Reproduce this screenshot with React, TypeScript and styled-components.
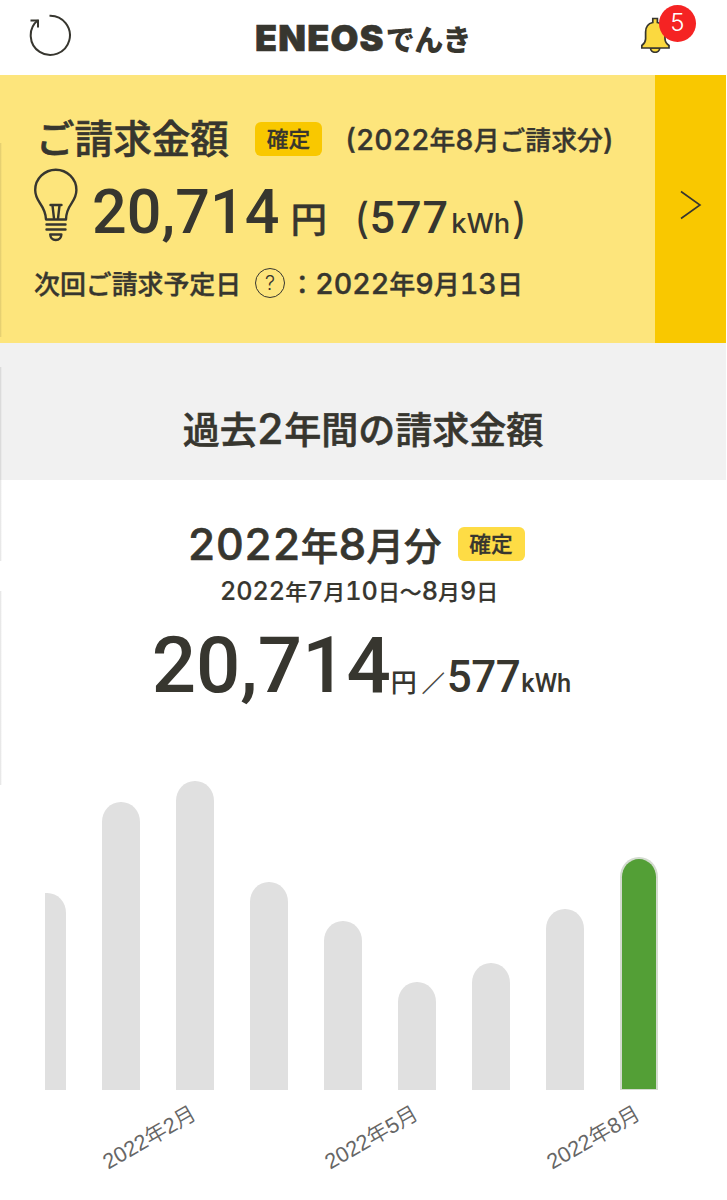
import React from 'react';
import styled, { createGlobalStyle } from 'styled-components';

const INK = '#37362f';
const JP = '"Noto Sans CJK JP", sans-serif';

const GlobalStyle = createGlobalStyle`
  * { box-sizing: border-box; }
  body { margin: 0; background: #fff; color: ${INK}; font-family: ${JP}; }
`;

const Page = styled.div`
  position: relative;
  width: 726px;
  height: 1200px;
  overflow: hidden;
  background: #fff;
`;

const Header = styled.header`
  display: flex;
  align-items: flex-start;
  justify-content: space-between;
  height: 75px;
  padding: 14px 29px 0 27px;
`;

const Logo = styled.h1`
  display: flex;
  align-items: baseline;
  margin: 6px 0 0 14px;
  line-height: 1;
  white-space: nowrap;
`;

const LogoLatin = styled.span`
  font: 900 36px/1 Inter, sans-serif;
  letter-spacing: 1.2px;
  margin-right: 1px;
  -webkit-text-stroke: 0.6px ${INK};
`;

const LogoKana = styled.span`
  font: 900 29px/1 ${JP};
  letter-spacing: -0.6px;
`;

const BellButton = styled.div`
  position: relative;
  width: 56px;
  height: 40px;
  padding-top: 3px;
`;

const Count = styled.span`
  position: absolute;
  left: 18px;
  top: -9px;
  width: 37px;
  height: 37px;
  border-radius: 50%;
  background: #f52323;
  color: #fff;
  font: 300 24px/36px Inter, sans-serif;
  text-align: center;
`;

const Banner = styled.section`
  display: flex;
  height: 268px;
  background: #fde57c;
`;

const BannerBody = styled.div`
  flex: 1;
  padding: 44px 0 0 34px;
`;

const BannerNext = styled.div`
  display: flex;
  align-items: center;
  justify-content: center;
  width: 71px;
  padding-bottom: 9px;
  background: #f9c800;
`;

const Row = styled.div<{ $h: number; $top?: number; $base?: boolean; $center?: boolean; $end?: number }>`
  display: flex;
  align-items: ${(p) => (p.$base ? 'baseline' : 'center')};
  justify-content: ${(p) => (p.$center ? 'center' : 'flex-start')};
  height: ${(p) => p.$h}px;
  margin-top: ${(p) => p.$top ?? 0}px;
  padding-right: ${(p) => p.$end ?? 0}px;
`;

const Text = styled.span<{ $size: number; $stroke?: number; $left?: number; $lift?: number; $weight?: number }>`
  font: ${(p) => p.$weight ?? 500} ${(p) => p.$size}px/1 ${JP};
  -webkit-text-stroke: ${(p) => p.$stroke ?? 0.4}px ${INK};
  margin-left: ${(p) => p.$left ?? 0}px;
  margin-bottom: ${(p) => p.$lift ?? 0}px;
  white-space: nowrap;
`;

const Num = styled.span<{ $ratio: number }>`
  font-family: Inter, sans-serif;
  font-size: ${(p) => p.$ratio}em;
  font-weight: 500;
  line-height: 0;
  font-feature-settings: "tnum";
`;

const Figure = styled.span<{ $size: number; $left?: number; $track?: number; $weight?: number; $inter?: boolean }>`
  font: ${(p) => p.$weight ?? 500} ${(p) => p.$size}px/1 ${(p) => (p.$inter ? 'Inter' : 'Roboto')}, sans-serif;
  letter-spacing: ${(p) => p.$track ?? 0}px;
  margin-left: ${(p) => p.$left ?? 0}px;
  white-space: nowrap;
`;

const Badge = styled.span<{ $color: string; $left: number }>`
  width: 67px;
  height: 34px;
  margin-left: ${(p) => p.$left}px;
  border-radius: 6px;
  background: ${(p) => p.$color};
  font: 500 21.7px/32px ${JP};
  -webkit-text-stroke: 0.3px ${INK};
  text-align: center;
  white-space: nowrap;
`;

const Bulb = styled.svg`
  flex: none;
  align-self: flex-start;
  width: 44px;
  height: 74px;
  margin-top: -14px;
`;

const Help = styled.span`
  width: 30px;
  height: 30px;
  margin-left: 14px;
  border: 1.5px solid ${INK};
  border-radius: 50%;
  font: 300 20px/28px Inter, sans-serif;
  text-align: center;
`;

const SectionTitle = styled.div`
  display: flex;
  align-items: center;
  justify-content: center;
  height: 137px;
  padding-top: 34px;
  background: #f1f1f1;
`;

const Detail = styled.section`
  padding-top: 44px;
`;

const Chart = styled.div`
  width: 640px;
  margin: 65px 0 0 45px;
`;

const Plot = styled.div`
  display: flex;
  align-items: flex-end;
  gap: 36.6px;
  height: 320px;
  overflow: hidden;
`;

const Bar = styled.div<{ $active?: boolean }>`
  flex: none;
  width: 37.4px;
  border-radius: 18.7px 18.7px 0 0 / 20px 20px 0 0;
  background: ${(p) => (p.$active ? '#d4dbd0' : '#e0e0e0')};
  padding: 2px 1.5px 1px;

  &:first-child { margin-left: -16.7px; }
`;

const BarFill = styled.div`
  height: 100%;
  border-radius: 17.2px 17.2px 0 0 / 18.5px 18.5px 0 0;
  background: #539f36;
`;

const Axis = styled.div`
  display: flex;
  padding-left: 1px;
`;

const Tick = styled.div`
  display: flex;
  justify-content: flex-end;
  width: 74px;
  height: 40px;
`;

const TickLabel = styled.span`
  flex: none;
  height: 24px;
  margin-top: 10px;
  transform: rotate(-30deg);
  transform-origin: 100% 50%;
  color: #666;
  font: 350 21.6px/24px "Liberation Sans", ${JP};
  white-space: nowrap;
`;

const EdgeShadow = styled.i<{ $top: number }>`
  position: absolute;
  left: 0;
  top: ${(p) => p.$top}px;
  width: 2px;
  height: 194px;
  background: linear-gradient(90deg, rgba(0, 0, 0, 0.12), rgba(0, 0, 0, 0));
`;

const mixed = (s: string, ratio = 1.1) =>
  s.split(/([0-9()]+)/).map((part, i) =>
    /[0-9()]/.test(part) ? (
      <Num key={i} $ratio={ratio}>
        {part}
      </Num>
    ) : (
      part
    ),
  );

const bars = [197, 288, 309, 208, 169, 108, 127, 181, 233];
const ticks = ['', '2022年2月', '', '', '2022年5月', '', '', '2022年8月'];

export default function App() {
  return (
    <Page>
      <GlobalStyle />
      <Header>
        <svg width="44" height="44" viewBox="28 14 44 44" fill="none" stroke={INK} strokeWidth="2">
          <path d="M50.5 15.8A19.6 19.6 0 1 1 38.8 20.3" />
          <path d="M31.5 20.4H39V27.5" />
        </svg>
        <Logo>
          <LogoLatin>ENEOS</LogoLatin>
          <LogoKana>でんき</LogoKana>
        </Logo>
        <BellButton>
          <svg width="30" height="36" viewBox="641 17 30 36" fill="#fbd93f" stroke={INK} strokeWidth="1.7">
            <path d="M650.5 48a4.6 4.3 0 0 0 9.2 0z" />
            <path d="M652.8 22.5V18.5H657.4V22.5C662 23.5 665 27 665 32V39Q665.2 43 669 45.5V48H641.8V45.5Q645.4 43 645.6 39V32C645.6 27 648.5 23.5 652.8 22.5Z" />
          </svg>
          <Count>5</Count>
        </BellButton>
      </Header>

      <Banner>
        <BannerBody>
          <Row $h={40}>
            <Text $size={38.6} $left={2} $lift={6} $stroke={0.6}>ご請求金額</Text>
            <Badge $color="#f9c800" $left={26}>確定</Badge>
            <Text $size={25.8} $left={23}>{mixed('(2022年8月ご請求分)')}</Text>
          </Row>
          <Row $h={61} $top={23} $base>
            <Bulb viewBox="34 168 44 74" fill="none" stroke={INK} strokeWidth="2.4" strokeLinecap="round" strokeLinejoin="round">
              <path d="M46 219.5C45.5 204 35.2 203 35.2 190A20.6 20.2 0 0 1 76.4 190C76.4 203 66 204 66 219.5Z" />
              <path d="M50.5 205H61.5M52.5 205.5L54 218.5M59.5 205.5L58 218.5" />
              <path d="M46.5 224.5H65.5M46.5 229.5H65.5" />
              <path d="M50.2 234.5H61.4Q61 240 55.8 240T50.2 234.5Z" />
            </Bulb>
            <Figure $size={61} $left={14} $track={0.1}>20,714</Figure>
            <Text $size={36.5} $left={11}>円</Text>
            <Figure $size={42} $left={27} $weight={400} $inter>(</Figure>
            <Figure $size={45} $track={1}>577</Figure>
            <Figure $size={27.3} $left={2} $inter>kWh</Figure>
            <Figure $size={42} $left={1.5} $weight={400} $inter>)</Figure>
          </Row>
          <Row $h={30} $top={25}>
            <Text $size={25.9}>次回ご請求予定日</Text>
            <Help>?</Help>
            <Text $size={26} $left={4}>{mixed('：2022年9月13日', 1.1)}</Text>
          </Row>
        </BannerBody>
        <BannerNext>
          <svg width="24" height="30" viewBox="0 0 24 30" fill="none" stroke={INK} strokeWidth="1.6">
            <path d="M2 1.5L21 15L2 28.5" />
          </svg>
        </BannerNext>
      </Banner>

      <SectionTitle>
        <Text $size={37} $stroke={0.6}>{mixed('過去2年間の請求金額', 1.14)}</Text>
      </SectionTitle>

      <Detail>
        <Row $h={40} $center $end={14}>
          <Text $size={37.5} $stroke={0.6}>{mixed('2022年8月分', 1.165)}</Text>
          <Badge $color="#fedc45" $left={16}>確定</Badge>
        </Row>
        <Row $h={24} $top={15} $center $end={8}>
          <Text $size={21.9} $stroke={0.2}>{mixed('2022年7月10日〜8月9日', 1.15)}</Text>
        </Row>
        <Row $h={78} $top={24} $base $center $end={3}>
          <Figure $size={78}>20,714</Figure>
          <Text $size={26} $stroke={0}>円</Text>
          <Text $size={23} $weight={400} $stroke={0.3} $left={5}>／</Text>
          <Figure $size={44} $left={2} $track={-0.5}>577</Figure>
          <Figure $size={25.5} $left={1}>kWh</Figure>
        </Row>
        <Chart>
          <Plot>
            {bars.map((h, i) => (
              <Bar key={i} $active={i === 8} style={{ height: h }}>
                {i === 8 && <BarFill />}
              </Bar>
            ))}
          </Plot>
          <Axis>
            {ticks.map((t, i) => (
              <Tick key={i}>{t && <TickLabel>{t}</TickLabel>}</Tick>
            ))}
          </Axis>
        </Chart>
      </Detail>

      <EdgeShadow $top={143} />
      <EdgeShadow $top={367} />
      <EdgeShadow $top={591} />
    </Page>
  );
}
